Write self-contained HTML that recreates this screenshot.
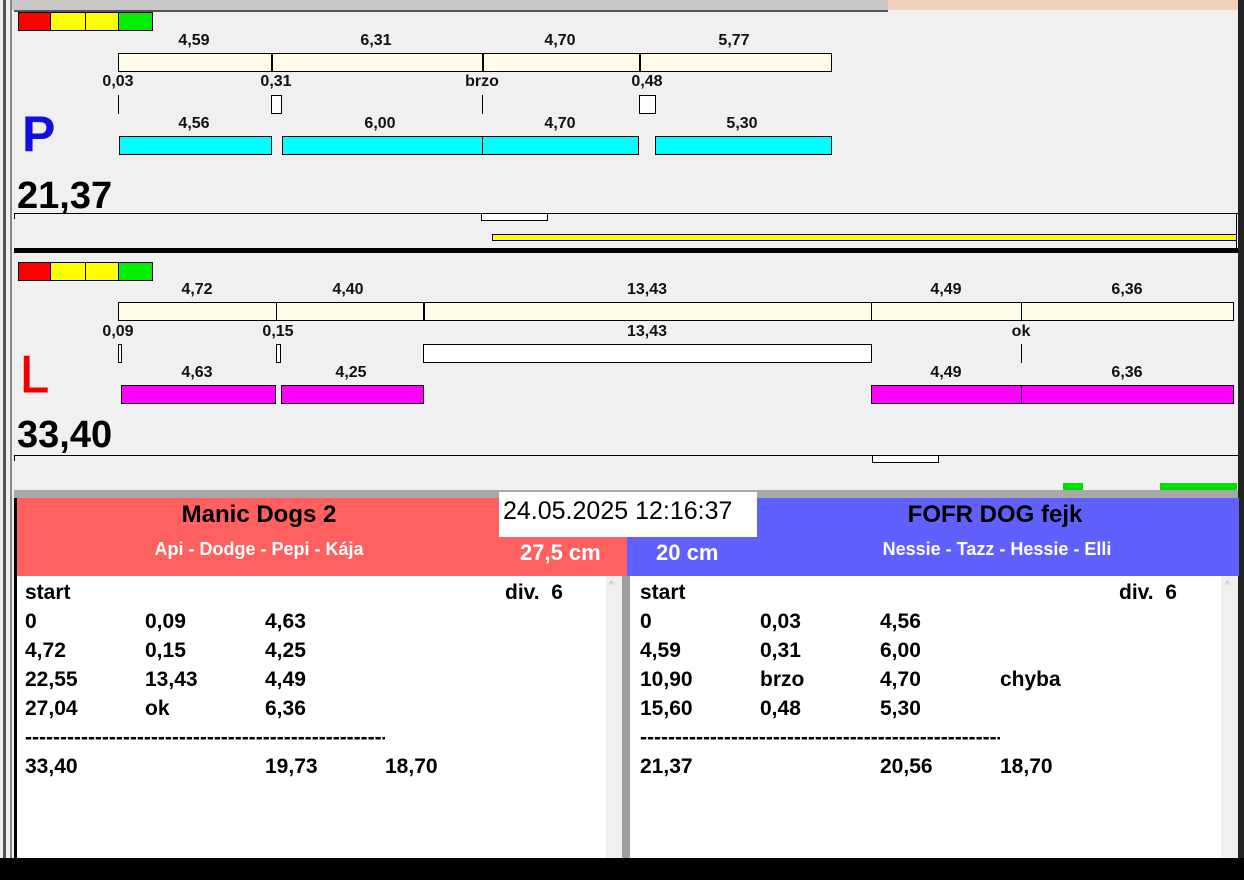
<!DOCTYPE html>
<html><head><meta charset="utf-8"><style>
*{margin:0;padding:0;box-sizing:border-box}
body{width:1244px;height:880px;overflow:hidden;background:#000;position:relative;font-family:"Liberation Sans",Arial,sans-serif;font-weight:bold}
div{position:absolute}
.lb{font-size:16px;color:#111;transform:translateX(-50%);line-height:16px;white-space:nowrap}
.bx{border:1px solid #000}
.cr{background:#fffde8;border:1px solid #000}
.cy{background:#00ffff;border:1px solid #000}
.mg{background:#ff00ff;border:1px solid #000}
.vl{width:1px;background:#000}
.t{font-size:21px;color:#000;line-height:22px;white-space:nowrap}
</style></head><body>
<!-- frame -->
<div style="left:0;top:0;width:14px;height:858px;background:#f0f0f0"></div>
<div style="left:3px;top:0;width:3px;height:858px;background:#555"></div>
<div style="left:10px;top:0;width:2px;height:858px;background:#888"></div>
<div style="left:12px;top:0;width:876px;height:10px;background:#c8c8c8"></div>
<div style="left:888px;top:0;width:350px;height:11px;background:#f0d0b8"></div>
<div style="left:1238px;top:0;width:6px;height:858px;background:#222"></div>
<div style="left:14px;top:10px;width:1224px;height:238px;background:#f0f0f0"></div>
<div style="left:14px;top:10px;width:874px;height:2px;background:#555"></div>
<div style="left:14px;top:248px;width:1224px;height:5px;background:#000"></div>
<div style="left:14px;top:253px;width:1224px;height:237px;background:#f0f0f0"></div>
<div style="left:14px;top:490px;width:1224px;height:8px;background:#a8a8a8"></div>

<!-- P section -->
<div class="bx" style="left:18px;top:12px;width:33px;height:19px;background:#f00"></div>
<div class="bx" style="left:50px;top:12px;width:36px;height:19px;background:#ff0"></div>
<div class="bx" style="left:85px;top:12px;width:34px;height:19px;background:#ff0"></div>
<div class="bx" style="left:118px;top:12px;width:35px;height:19px;background:#0e0"></div>

<div class="lb" style="left:194px;top:33px">4,59</div>
<div class="lb" style="left:376px;top:33px">6,31</div>
<div class="lb" style="left:560px;top:33px">4,70</div>
<div class="lb" style="left:734px;top:33px">5,77</div>
<div class="cr" style="left:118px;top:53px;width:714px;height:19px"></div>
<div class="vl" style="left:271px;top:53px;height:19px;width:2px"></div>
<div class="vl" style="left:482px;top:53px;height:19px;width:2px"></div>
<div class="vl" style="left:639px;top:53px;height:19px;width:2px"></div>
<div class="lb" style="left:118px;top:74px">0,03</div>
<div class="lb" style="left:276px;top:74px">0,31</div>
<div class="lb" style="left:482px;top:74px">brzo</div>
<div class="lb" style="left:647px;top:74px">0,48</div>
<div class="vl" style="left:118px;top:95px;height:19px"></div>
<div class="bx" style="left:271px;top:95px;width:11px;height:19px;background:#fff"></div>
<div class="vl" style="left:482px;top:95px;height:19px"></div>
<div class="bx" style="left:639px;top:95px;width:17px;height:19px;background:#fff"></div>
<div style="left:22px;top:104px;font-size:50px;color:#1010e0;line-height:60px">P</div>
<div class="lb" style="left:194px;top:116px">4,56</div>
<div class="lb" style="left:380px;top:116px">6,00</div>
<div class="lb" style="left:560px;top:116px">4,70</div>
<div class="lb" style="left:742px;top:116px">5,30</div>
<div class="cy" style="left:119px;top:136px;width:153px;height:19px"></div>
<div class="cy" style="left:282px;top:136px;width:201px;height:19px"></div>
<div class="cy" style="left:482px;top:136px;width:157px;height:19px"></div>
<div class="cy" style="left:655px;top:136px;width:177px;height:19px"></div>
<div style="left:17px;top:175px;font-size:38px;color:#000;line-height:42px">21,37</div>
<div style="left:14px;top:213px;width:1224px;height:1px;background:#000"></div>
<div style="left:14px;top:213px;width:1px;height:6px;background:#000"></div>
<div style="left:1236px;top:213px;width:1px;height:35px;background:#000"></div>
<div class="bx" style="left:481px;top:213px;width:67px;height:8px;background:#fff"></div>
<div class="bx" style="left:492px;top:234px;width:745px;height:7px;background:#ff0"></div>

<!-- L section -->
<div class="bx" style="left:18px;top:262px;width:33px;height:19px;background:#f00"></div>
<div class="bx" style="left:50px;top:262px;width:36px;height:19px;background:#ff0"></div>
<div class="bx" style="left:85px;top:262px;width:34px;height:19px;background:#ff0"></div>
<div class="bx" style="left:118px;top:262px;width:35px;height:19px;background:#0e0"></div>
<div class="lb" style="left:197px;top:282px">4,72</div>
<div class="lb" style="left:348px;top:282px">4,40</div>
<div class="lb" style="left:647px;top:282px">13,43</div>
<div class="lb" style="left:946px;top:282px">4,49</div>
<div class="lb" style="left:1127px;top:282px">6,36</div>
<div class="cr" style="left:118px;top:302px;width:1116px;height:19px"></div>
<div class="vl" style="left:276px;top:302px;height:19px"></div>
<div class="vl" style="left:423px;top:302px;height:19px;width:2px"></div>
<div class="vl" style="left:871px;top:302px;height:19px"></div>
<div class="vl" style="left:1021px;top:302px;height:19px"></div>
<div class="lb" style="left:118px;top:324px">0,09</div>
<div class="lb" style="left:278px;top:324px">0,15</div>
<div class="lb" style="left:647px;top:324px">13,43</div>
<div class="lb" style="left:1021px;top:324px">ok</div>
<div class="bx" style="left:118px;top:344px;width:4px;height:19px;background:#fff"></div>
<div class="bx" style="left:276px;top:344px;width:5px;height:19px;background:#fff"></div>
<div class="bx" style="left:423px;top:344px;width:449px;height:19px;background:#fff"></div>
<div class="vl" style="left:1021px;top:344px;height:19px"></div>
<div style="left:20px;top:345px;font-size:52px;color:#f00000;line-height:60px;font-weight:normal;-webkit-text-stroke:1px #f00000">L</div>
<div class="lb" style="left:197px;top:365px">4,63</div>
<div class="lb" style="left:351px;top:365px">4,25</div>
<div class="lb" style="left:946px;top:365px">4,49</div>
<div class="lb" style="left:1127px;top:365px">6,36</div>
<div class="mg" style="left:121px;top:385px;width:155px;height:19px"></div>
<div class="mg" style="left:281px;top:385px;width:143px;height:19px"></div>
<div class="mg" style="left:871px;top:385px;width:151px;height:19px"></div>
<div class="mg" style="left:1021px;top:385px;width:213px;height:19px"></div>
<div style="left:17px;top:414px;font-size:38px;color:#000;line-height:42px">33,40</div>
<div style="left:14px;top:455px;width:1224px;height:1px;background:#000"></div>
<div style="left:14px;top:455px;width:1px;height:6px;background:#000"></div>
<div class="bx" style="left:872px;top:455px;width:67px;height:8px;background:#fff"></div>
<div style="left:1063px;top:483px;width:20px;height:7px;background:#00e000"></div>
<div style="left:1160px;top:483px;width:77px;height:7px;background:#00e000"></div>

<!-- bottom headers -->
<div style="left:17px;top:498px;width:610px;height:78px;background:#ff6060"></div>
<div style="left:627px;top:498px;width:612px;height:78px;background:#6060ff"></div>
<div style="left:499px;top:492px;width:258px;height:45px;background:#fff"></div>
<div style="left:503px;top:496px;font-size:25px;font-weight:normal;color:#000;line-height:30px">24.05.2025 12:16:37</div>
<div style="left:259px;top:501px;transform:translateX(-50%);font-size:24px;color:#000;white-space:nowrap;line-height:28px">Manic Dogs 2</div>
<div style="left:259px;top:539px;transform:translateX(-50%);font-size:18px;color:#fff;white-space:nowrap;line-height:20px">Api - Dodge - Pepi - Kája</div>
<div style="left:520px;top:540px;font-size:22px;color:#fff;line-height:26px">27,5 cm</div>
<div style="left:656px;top:540px;font-size:22px;color:#fff;line-height:26px">20 cm</div>
<div style="left:995px;top:501px;transform:translateX(-50%);font-size:24px;color:#000;white-space:nowrap;line-height:28px">FOFR DOG fejk</div>
<div style="left:997px;top:539px;transform:translateX(-50%);font-size:18px;color:#fff;white-space:nowrap;line-height:20px">Nessie - Tazz - Hessie - Elli</div>

<!-- lists -->
<div style="left:17px;top:576px;width:589px;height:282px;background:#fff"></div>
<div style="left:606px;top:576px;width:16px;height:282px;background:#f0f0f0"></div>
<div style="left:622px;top:576px;width:8px;height:282px;background:#a0a0a0"></div>
<div style="left:630px;top:576px;width:591px;height:282px;background:#fff"></div>
<div style="left:1221px;top:576px;width:17px;height:282px;background:#f0f0f0"></div>
<div style="left:609px;top:580px;font-size:10px;color:#aaa;font-weight:normal">^</div>
<div style="left:1225px;top:580px;font-size:10px;color:#aaa;font-weight:normal">^</div>

<div class="t" style="left:25px;top:582px">start</div><div class="t" style="left:505px;top:582px">div.&nbsp; 6</div>
<div class="t" style="left:25px;top:611px">0</div><div class="t" style="left:145px;top:611px">0,09</div><div class="t" style="left:265px;top:611px">4,63</div>
<div class="t" style="left:25px;top:640px">4,72</div><div class="t" style="left:145px;top:640px">0,15</div><div class="t" style="left:265px;top:640px">4,25</div>
<div class="t" style="left:25px;top:669px">22,55</div><div class="t" style="left:145px;top:669px">13,43</div><div class="t" style="left:265px;top:669px">4,49</div>
<div class="t" style="left:25px;top:698px">27,04</div><div class="t" style="left:145px;top:698px">ok</div><div class="t" style="left:265px;top:698px">6,36</div>
<div class="t" style="left:25px;top:727px;width:360px;overflow:hidden">----------------------------------------------------------------</div>
<div class="t" style="left:25px;top:756px">33,40</div><div class="t" style="left:265px;top:756px">19,73</div><div class="t" style="left:385px;top:756px">18,70</div>

<div class="t" style="left:640px;top:582px">start</div><div class="t" style="left:1119px;top:582px">div.&nbsp; 6</div>
<div class="t" style="left:640px;top:611px">0</div><div class="t" style="left:760px;top:611px">0,03</div><div class="t" style="left:880px;top:611px">4,56</div>
<div class="t" style="left:640px;top:640px">4,59</div><div class="t" style="left:760px;top:640px">0,31</div><div class="t" style="left:880px;top:640px">6,00</div>
<div class="t" style="left:640px;top:669px">10,90</div><div class="t" style="left:760px;top:669px">brzo</div><div class="t" style="left:880px;top:669px">4,70</div><div class="t" style="left:1000px;top:669px">chyba</div>
<div class="t" style="left:640px;top:698px">15,60</div><div class="t" style="left:760px;top:698px">0,48</div><div class="t" style="left:880px;top:698px">5,30</div>
<div class="t" style="left:640px;top:727px;width:360px;overflow:hidden">----------------------------------------------------------------</div>
<div class="t" style="left:640px;top:756px">21,37</div><div class="t" style="left:880px;top:756px">20,56</div><div class="t" style="left:1000px;top:756px">18,70</div>
</body></html>
